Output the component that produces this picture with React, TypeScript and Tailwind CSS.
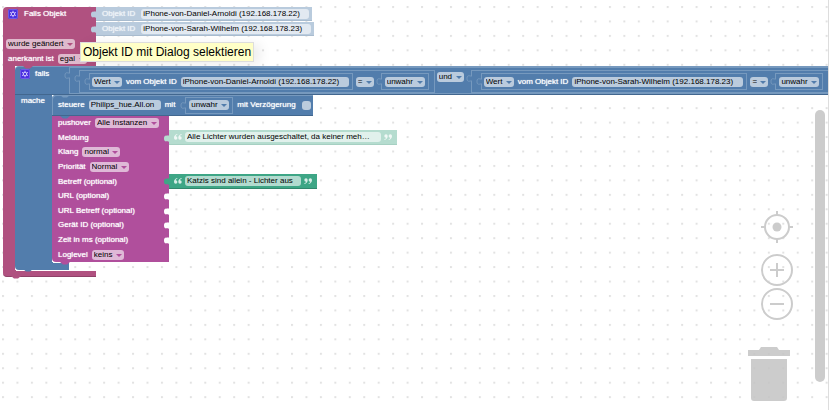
import type { ReactNode } from "react";

const FIELD =
  "h-[10px] shrink-0 appearance-none rounded-[3px] border-0 p-0 text-[8px] leading-[10px] text-black outline-none [text-shadow:none]";

function Dropdown({
  value,
  label,
  tone = "bg-[#bacbdd]",
  arrow = "text-[#527dac]",
}: {
  value: string;
  label: string;
  tone?: string;
  arrow?: string;
}) {
  return (
    <span className="relative flex shrink-0">
      <select aria-label={label} className={`${FIELD} ${tone} pr-[11px] pl-[2px]`} defaultValue={value}>
        <option>{value}</option>
      </select>
      <svg
        viewBox="0 0 6 4"
        className={`pointer-events-none absolute top-[4px] right-[2px] h-[4px] w-[6px] ${arrow}`}
      >
        <path d="M0 0h6L3 3z" fill="currentColor" />
      </svg>
    </span>
  );
}

function TextField({
  value,
  label,
  width,
  tone = "bg-[#bacbdd]",
}: {
  value: string;
  label: string;
  width: string;
  tone?: string;
}) {
  return (
    <input aria-label={label} className={`${FIELD} ${tone} ${width} px-[2px]`} defaultValue={value} />
  );
}

function Gear({ label }: { label: string }) {
  return (
    <button aria-label={label} className="h-[10px] w-[10px] shrink-0 rounded-[2px] bg-[#4a2fe0]">
      <svg viewBox="0 0 10 10" className="h-full w-full">
        <rect x="0.5" y="0.5" width="9" height="9" rx="1.5" fill="none" stroke="#6f5ae8" />
        <circle cx="5" cy="5" r="1.800" fill="none" stroke="#d9d2ff" strokeWidth="1" />
        <path
          d="M5 1.8v1M5 7.2v1M2.2 3.4l.9.5M6.9 6.1l.9.5M2.2 6.6l.9-.5M6.9 3.9l.9-.5"
          stroke="#d9d2ff"
          strokeWidth="1"
        />
      </svg>
    </button>
  );
}

function Tab({ color }: { color: string }) {
  return (
    <svg viewBox="0 0 5 9" className={`absolute top-[3px] right-0 h-[9px] w-[5px] ${color}`}>
      <path d="M5 0v1C4 2.500 0 0 0 4.500S4 6.500 5 8v1z" fill="currentColor" />
    </svg>
  );
}

function Notch({ color, place }: { color: string; place: string }) {
  return (
    <svg viewBox="0 0 10 3" className={`absolute h-[3px] w-[10px] ${place} ${color}`}>
      <path d="M0 0h10L7 2.500H3z" fill="currentColor" />
    </svg>
  );
}

function Slot({ children, className }: { children: ReactNode; className: string }) {
  return (
    <div className={`relative flex shrink-0 border border-[#7699be] ${className}`}>
      <svg viewBox="0 0 6 9" className="absolute top-[3px] -left-[6px] h-[9px] w-[6px]">
        <path d="M6 0v2C4 2.500 1 0 1 4.500S4 6.500 6 7v2" fill="#527dac" stroke="#7699be" />
      </svg>
      {children}
    </div>
  );
}

function Comparison({ id, width, className }: { id: string; width: string; className: string }) {
  return (
    <Slot className={`h-[23px] items-center pr-[5px] pl-[9px] ${className}`}>
      <Slot className="h-[17px] items-center gap-1 pr-[3px] pl-[2px]">
        <Dropdown value="Wert" label="Eigenschaft" />
        <span>vom Objekt ID</span>
        <TextField value={id} label="Objekt ID" width={width} />
      </Slot>
      <span className="ml-[3px] flex">
        <Dropdown value="=" label="Vergleich" />
      </span>
      <Slot className="ml-[7px] h-[17px] items-center px-[3px]">
        <Dropdown value="unwahr" label="Wahrheitswert" />
      </Slot>
    </Slot>
  );
}

function ObjectId({ id, width }: { id: string; width: string }) {
  return (
    <label className="flex h-[14px] items-center gap-[6px] border-b border-[#a9bccf] bg-[#b9cbdd] pr-[3px] pl-[6px] text-[#edf2f7]">
      Objekt ID
      <TextField value={id} label="Objekt ID" width={width} tone="bg-[#e2e9f1]" />
    </label>
  );
}

function Quote({ close = false }: { close?: boolean }) {
  return (
    <svg viewBox="0 0 8 6" className={`h-[6px] w-[8px] shrink-0 ${close ? "rotate-180" : ""}`}>
      <path
        d="M3.300 0C1.200.6 0 2 0 4a1.700 1.700 0 1 0 1.700-1.700C1.800 1.500 2.400 1 3.400.8zM7.600 0C5.500.6 4.300 2 4.300 4a1.700 1.700 0 1 0 1.700-1.700C6.100 1.500 6.700 1 7.700.8z"
        fill="currentColor"
        opacity="0.800"
      />
    </svg>
  );
}

function TextBlock({
  value,
  label,
  width,
  block,
  tone,
}: {
  value: string;
  label: string;
  width: string;
  block: string;
  tone: string;
}) {
  return (
    <div className={`flex h-[15px] items-center gap-[3px] border-b px-[5px] ${block}`}>
      <Quote />
      <TextField value={value} label={label} width={width} tone={tone} />
      <Quote close />
    </div>
  );
}

function PushRow({
  name,
  option,
  tab,
  children,
}: {
  name: string;
  option?: string;
  tab?: string;
  children?: ReactNode;
}) {
  return (
    <div className="flex items-center">
      <div className="relative flex h-full w-[117px] shrink-0 items-center gap-1 pl-[6px]">
        <span>{name}</span>
        {option && (
          <Dropdown value={option} label={name} tone="bg-[#dfb9d7]" arrow="text-[#b04f9c]" />
        )}
        {tab && <Tab color={tab} />}
      </div>
      {children}
    </div>
  );
}

function ZoomButton({ label, children }: { label: string; children: ReactNode }) {
  return (
    <button aria-label={label} className="h-8 w-8">
      <svg viewBox="0 0 32 32" fill="none" stroke="#ccc" strokeWidth="2">
        {children}
      </svg>
    </button>
  );
}

export default function App() {
  return (
    <main className="relative min-h-screen overflow-hidden border-r border-[#ddd] bg-white pt-[7px] pl-[3px] font-['Liberation_Sans',Arial,sans-serif] text-[8px] leading-[10px] whitespace-nowrap text-white">
      <svg className="absolute inset-0 h-full w-full" aria-hidden="true">
        <defs>
          <pattern id="dots" x="2" y="6" width="14.450" height="14.450" patternUnits="userSpaceOnUse">
            <rect width="2" height="2" fill="#e2e2e2" />
          </pattern>
        </defs>
        <rect width="100%" height="100%" fill="url(#dots)" />
      </svg>

      <section className="relative [text-shadow:0_0_1px_white]">
        <div className="grid h-[59px] grid-rows-4 rounded-tl-[4px] bg-[linear-gradient(#b05180,#b05180)] bg-[length:93px_100%] bg-no-repeat">
          <div className="flex items-center">
            <div className="relative flex h-full w-[93px] shrink-0 items-center gap-[6px] pl-[5px]">
              <Gear label="Falls Objekt bearbeiten" />
              Falls Objekt
              <Tab color="text-[#b9cbdd]" />
            </div>
            <ObjectId id="iPhone-von-Daniel-Arnoldi (192.168.178.22)" width="w-[168px]" />
          </div>
          <div className="flex items-center">
            <div className="relative h-full w-[93px] shrink-0">
              <Tab color="text-[#b9cbdd]" />
            </div>
            <ObjectId id="iPhone-von-Sarah-Wilhelm (192.168.178.23)" width="w-[170px]" />
          </div>
          <div className="flex items-center pl-[3px]">
            <Dropdown
              value="wurde geändert"
              label="Auslöser"
              tone="bg-[#dfb9cc]"
              arrow="text-[#b05180]"
            />
          </div>
          <div className="flex items-center gap-1 pl-[5px]">
            <span>anerkannt ist</span>
            <Dropdown
              value="egal"
              label="anerkannt ist"
              tone="bg-[#dfb9cc]"
              arrow="text-[#b05180]"
            />
          </div>
        </div>

        <div className="flex">
          <div className="w-3 shrink-0 bg-[#b05180]" />
          <div className="relative min-w-0 flex-1">
            <Notch color="text-[#b05180]" place="top-0 left-2 z-10" />
            <div className="flex h-[29px] rounded-tl-[4px] border-t border-b border-t-[#7699be] border-b-[#42678f] bg-[#527dac]">
              <div className="flex w-[54px] shrink-0 gap-[5px] pt-[2px] pl-[5px]">
                <Gear label="falls bearbeiten" />
                falls
              </div>
              <Slot className="w-[800px] border-r-0">
                <Comparison
                  id="iPhone-von-Daniel-Arnoldi (192.168.178.22)"
                  width="w-[168px]"
                  className="mt-[2px] ml-[9px]"
                />
                <span className="mt-1 ml-[2px]">
                  <Dropdown value="und" label="Verknüpfung" />
                </span>
                <Comparison
                  id="iPhone-von-Sarah-Wilhelm (192.168.178.23)"
                  width="w-[171px]"
                  className="mt-[2px] ml-[7px]"
                />
              </Slot>
            </div>

            <div className="flex">
              <div className="w-[37px] shrink-0 bg-[#527dac] pt-[1px] pl-[6px]">mache</div>
              <div>
                <div className="relative flex h-[21px] w-[261px] items-center gap-1 rounded-tl-[4px] border-b border-b-[#42678f] bg-[#527dac] pl-[6px] shadow-[inset_1px_1px_#7699be]">
                  <Notch color="text-[#7699be]" place="top-0 left-2" />
                  <span>steuere</span>
                  <TextField value="Philips_hue.All.on" label="steuere" width="w-[72px]" />
                  <span>mit</span>
                  <Slot className="ml-[6px] h-[17px] items-center px-[3px]">
                    <Dropdown value="unwahr" label="mit" />
                  </Slot>
                  <label className="flex items-center gap-[6px]">
                    mit Verzögerung
                    <input
                      type="checkbox"
                      className="h-[9px] w-[9px] appearance-none rounded-[3px] bg-[#bacbdd]"
                    />
                  </label>
                </div>

                <div className="relative grid h-[146px] grid-rows-10 rounded-bl-[4px] bg-[linear-gradient(#b04f9c,#b04f9c)] bg-[length:117px_100%] bg-no-repeat">
                  <Notch color="text-[#527dac]" place="top-0 left-2" />
                  <Notch color="text-[#b04f9c]" place="-bottom-[3px] left-2 z-10" />
                  <PushRow name="pushover" option="Alle Instanzen" />
                  <PushRow name="Meldung" tab="text-[#b5dccf]">
                    <TextBlock
                      value="Alle Lichter wurden ausgeschaltet, da keiner meh…"
                      label="Meldung"
                      width="w-[196px]"
                      block="border-[#a6d0c2] bg-[#b5dccf]"
                      tone="bg-[#e1f1ec]"
                    />
                  </PushRow>
                  <PushRow name="Klang" option="normal" />
                  <PushRow name="Priorität" option="Normal" />
                  <PushRow name="Betreff (optional)" tab="text-[#3ea686]">
                    <TextBlock
                      value="Katzis sind allein - Lichter aus"
                      label="Betreff"
                      width="w-[116px]"
                      block="border-[#32876d] bg-[#3ea686]"
                      tone="bg-[#b2dbcf]"
                    />
                  </PushRow>
                  <PushRow name="URL (optional)" tab="text-white" />
                  <PushRow name="URL Betreff (optional)" tab="text-white" />
                  <PushRow name="Gerät ID (optional)" tab="text-white" />
                  <PushRow name="Zeit in ms (optional)" tab="text-white" />
                  <PushRow name="Loglevel" option="keins" />
                </div>
              </div>
            </div>

            <div className="relative h-2 w-[54px] rounded-bl-[4px] bg-[#527dac]">
              <div className="ml-[38px] h-px bg-white" />
              <Notch color="text-[#527dac]" place="-bottom-[2px] left-2 z-10" />
            </div>
          </div>
        </div>

        <div className="relative h-[7px] w-[93px] rounded-bl-[4px] border-b border-[#8f4168] bg-[#b05180]">
          <div className="ml-[13px] h-px bg-white" />
          <Notch color="text-[#b05180]" place="-bottom-[3px] left-2" />
        </div>
      </section>

      <div
        role="tooltip"
        className="absolute top-[42px] left-[80px] border border-[#ddd] bg-[#ffffc7] px-[2px] text-[12px] leading-[18px] text-black shadow-[6px_2px_12px_rgba(0,0,0,0.08)]"
      >
        Objekt ID mit Dialog selektieren
      </div>

      <div className="absolute right-[35px] bottom-[90px] flex flex-col items-center gap-[2px]">
        <button aria-label="Zentrieren" className="mb-[9px] h-8 w-8">
          <svg viewBox="0 0 32 32" fill="none" stroke="#ccc" strokeWidth="2">
            <circle cx="16" cy="16" r="12" />
            <circle cx="16" cy="16" r="4.500" fill="#ccc" stroke="none" />
            <path d="M16 0v4M16 28v4M0 16h4M28 16h4" />
          </svg>
        </button>
        <ZoomButton label="Vergrößern">
          <circle cx="16" cy="16" r="15" />
          <path d="M16 9v14M9 16h14" />
        </ZoomButton>
        <ZoomButton label="Verkleinern">
          <circle cx="16" cy="16" r="15" />
          <path d="M9 16h14" />
        </ZoomButton>
      </div>

      <button aria-label="Papierkorb" className="absolute right-[38px] bottom-[9px] h-[54px] w-[42px]">
        <svg viewBox="0 0 42 54" fill="#c4c4c4" opacity="0.850">
          <path d="M0 3h11l2-3h16l2 3h11v6H0zM3 12h36v39q0 3-3 3H6q-3 0-3-3z" />
        </svg>
      </button>

      <div className="absolute top-[110px] right-[3px] bottom-[28px] w-[10px] rounded-full bg-[#ccc]" />
    </main>
  );
}
